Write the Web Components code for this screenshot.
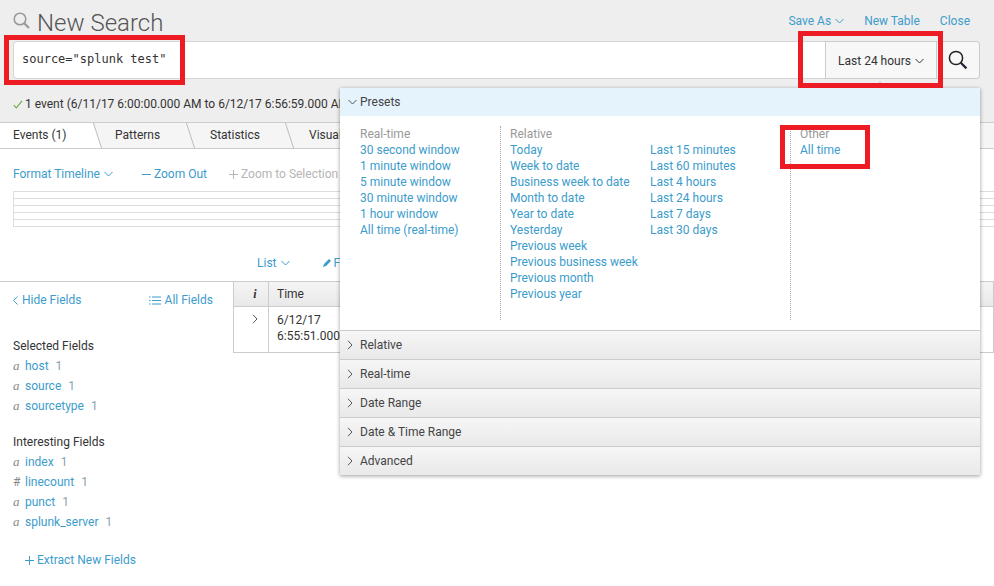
<!DOCTYPE html>
<html>
<head>
<meta charset="utf-8">
<title>New Search</title>
<style>
  html, body { margin: 0; padding: 0; background: #fff; }
  body { font: 12px/16px Roboto, "Liberation Sans", sans-serif; color: #333; width: 994px; height: 586px; overflow: hidden; position: relative; }
</style>
</head>
<body>
<search-head></search-head>
<result-tabs></result-tabs>
<time-line></time-line>
<div style="display:flex;">
  <field-list></field-list>
  <event-table></event-table>
</div>
<time-menu></time-menu>
<red-mark style="left:4px;top:35px;width:181px;height:50px"></red-mark>
<red-mark style="left:798px;top:31px;width:145px;height:57px"></red-mark>
<red-mark style="left:780px;top:125px;width:90px;height:44px"></red-mark>
<script>
const chevDown = `<svg width="9" height="6" viewBox="0 0 9 6" style="margin-left:4px;vertical-align:1px"><path d="M.5 1l4 4 4-4" fill="none" stroke="currentColor"/></svg>`;
const chevRight = `<svg width="6" height="10" viewBox="0 0 6 10"><path d="M1 .8l4 4.2-4 4.2" fill="none" stroke="#555"/></svg>`;
const plusIcon = c => `<svg width="9" height="9" viewBox="0 0 9 9" style="margin-right:3px;vertical-align:-1px"><path d="M0 4.500h9M4.500 0v9" stroke="${c}"/></svg>`;
const minusIcon = c => `<svg width="9" height="9" viewBox="0 0 9 9" style="margin-right:3px;vertical-align:-1px"><path d="M0 4.500h9" stroke="${c}"/></svg>`;

class SearchHead extends HTMLElement {
  connectedCallback() {
    this.attachShadow({ mode: 'open' }).innerHTML = `
      <style>
        :host { display: block; height: 122px; background: #eee; border-bottom: 1px solid #ccc; }
        a { color: #3c9ccb; text-decoration: none; }
        .top { display: flex; align-items: center; height: 41px; padding: 0 24px 0 13px; box-sizing: border-box; }
        h1 { margin: 0 0 0 7px; font: 300 24px/28px Roboto, sans-serif; color: #555; flex: 1; padding-top: 4px; }
        .top a { margin-left: 20px; }
        .bar { display: flex; height: 38px; margin-left: 13px; width: 967px; }
        .input { width: 812px; box-sizing: border-box; background: #fff; border: 1px solid #d5d5d5; border-right: 0; border-radius: 4px 0 0 4px; padding: 9px 8px; font: 12px/16px "DejaVu Sans Mono", monospace; color: #333; }
        .range { width: 112px; box-sizing: border-box; background: #f7f7f7; border: 1px solid #ccc; display: flex; align-items: center; justify-content: center; color: #333; padding-top: 2px; }
        .go { width: 43px; box-sizing: border-box; background: #f7f7f7; border: 1px solid #ccc; border-left: 0; border-radius: 0 4px 4px 0; display: flex; align-items: center; justify-content: center; }
        .status { padding: 17px 0 0 13px; line-height: 16px; color: #333; white-space: nowrap; }
        .status svg { margin-right: 2px; vertical-align: -1px; }
      </style>
      <div class="top">
        <svg width="17" height="17" viewBox="0 0 17 17"><circle cx="7" cy="7" r="5.8" fill="none" stroke="#999" stroke-width="1.6"/><path d="M11 11l5 5" stroke="#999" stroke-width="2.2"/></svg>
        <h1>New Search</h1>
        <a>Save As${chevDown}</a><a>New Table</a><a>Close</a>
      </div>
      <div class="bar">
        <div class="input">source="splunk test"</div>
        <div class="range">Last 24 hours${chevDown}</div>
        <div class="go"><svg width="20" height="20" viewBox="0 0 20 20"><circle cx="8" cy="8" r="6.6" fill="none" stroke="#222" stroke-width="1.5"/><path d="M12.8 12.8l5.6 5.6" stroke="#223" stroke-width="2.2"/></svg></div>
      </div>
      <div class="status"><svg width="10" height="9" viewBox="0 0 10 9"><path d="M.7 5l2.6 3L9 .8" fill="none" stroke="#65a637" stroke-width="1.1"/></svg>1 event (6/11/17 6:00:00.000 AM to 6/12/17 6:56:59.000 AM)</div>
    `;
  }
}

class ResultTabs extends HTMLElement {
  connectedCallback() {
    const tabs = [['Events (1)', 93, 13], ['Patterns', 93, 22], ['Statistics', 99, 24], ['Visualization', 120, 24]];
    this.attachShadow({ mode: 'open' }).innerHTML = `
      <style>
        :host { display: block; height: 25px; background: #fff; border-bottom: 1px solid #ccc; }
        .row { display: flex; height: 25px; overflow: hidden; }
        .tab { position: relative; height: 25px; box-sizing: border-box; line-height: 25px; white-space: nowrap; color: #333; background: #f5f5f5; flex: none; }
        .tab.on { background: #fff; }
        .tab::after { content: ""; position: absolute; top: -1px; bottom: -1px; right: -5px; width: 9px; background: inherit; border-right: 1px solid #bbb; transform: skewX(18deg); }
        .fill { flex: 1; background: #f5f5f5; }
      </style>
      <div class="row">${tabs.map((t, i) => `<div class="tab${i ? '' : ' on'}" style="width:${t[1]}px;padding-left:${t[2]}px;z-index:${9 - i}">${t[0]}</div>`).join('')}<div class="fill"></div></div>
    `;
  }
}

class TimeLine extends HTMLElement {
  connectedCallback() {
    this.attachShadow({ mode: 'open' }).innerHTML = `
      <style>
        :host { display: block; height: 133px; box-sizing: border-box; padding: 17px 0 0 13px; border-bottom: 1px solid #ccc; }
        a { color: #3c9ccb; }
        .ctl { display: flex; height: 16px; white-space: nowrap; }
        .ctl a:nth-child(2) { margin-left: 29px; }
        .ctl a:nth-child(3) { margin-left: 22px; color: #b5b5b5; }
        .grid { margin-top: 9px; height: 36px; border-left: 1px solid #ddd; box-sizing: border-box;
          background: repeating-linear-gradient(to bottom, #ddd 0, #ddd 1px, transparent 1px, transparent 7px); }
        .views { display: flex; padding-left: 244px; margin-top: 28px; white-space: nowrap; }
        .views a:nth-child(2) { margin-left: 33px; }
      </style>
      <div class="ctl"><a>Format Timeline${chevDown}</a><a>${minusIcon('#3c9ccb')}Zoom Out</a><a>${plusIcon('#b5b5b5')}Zoom to Selection</a></div>
      <div class="grid"></div>
      <div class="views"><a>List${chevDown}</a><a><svg width="9" height="9" viewBox="0 0 9 9" style="margin-right:2px"><path d="M0 9l1-3 5-5 2 2-5 5z" fill="#3c9ccb"/></svg>Format</a></div>
    `;
  }
}

class FieldList extends HTMLElement {
  connectedCallback() {
    const row = ([t, n, c]) => `<div class="f"><i class="${c === '#' ? 'n' : ''}">${c}</i><a>${n}</a><span>1</span></div>`;
    const sel = [['a', 'host', 'a'], ['a', 'source', 'a'], ['a', 'sourcetype', 'a']];
    const int = [['a', 'index', 'a'], ['n', 'linecount', '#'], ['a', 'punct', 'a'], ['a', 'splunk_server', 'a']];
    this.attachShadow({ mode: 'open' }).innerHTML = `
      <style>
        :host { display: block; width: 233px; flex: none; box-sizing: border-box; padding: 10px 20px 0 13px; }
        a { color: #3c9ccb; }
        .top { display: flex; justify-content: space-between; }
        .top svg { vertical-align: -1px; margin-right: 4px; }
        .top a:last-child svg { margin-right: 4px; margin-left: -1px; }
        h3 { font: inherit; color: #333; margin: 0; height: 16px; }
        .f { height: 20px; line-height: 20px; display: flex; }
        .f i { width: 12px; color: #888; font: italic 13px/20px "Liberation Serif", serif; }
        .f i.n { font: 12px/20px Roboto, sans-serif; }
        .f span { margin-left: 7px; color: #8aa0ad; }
        .sel { margin-top: 30px; }
        .int { margin-top: 18px; }
        .ex { margin: 20px 0 0 12px; }
      </style>
      <div class="top"><a><svg width="5" height="9" viewBox="0 0 5 9"><path d="M4.500.5l-4 4 4 4" fill="none" stroke="#3c9ccb"/></svg>Hide Fields</a><a><svg width="12" height="9" viewBox="0 0 12 9"><path d="M3 1h9M3 4.500h9M3 8h9M0 1h1.500M0 4.500h1.500M0 8h1.500" stroke="#3c9ccb"/></svg>All Fields</a></div>
      <div class="sel"><h3>Selected Fields</h3><div style="margin-top:2px">${sel.map(row).join('')}</div></div>
      <div class="int"><h3>Interesting Fields</h3><div style="margin-top:2px">${int.map(row).join('')}</div></div>
      <div class="ex"><a>${plusIcon('#3c9ccb')}Extract New Fields</a></div>
    `;
  }
}

class EventTable extends HTMLElement {
  connectedCallback() {
    this.attachShadow({ mode: 'open' }).innerHTML = `
      <style>
        :host { display: block; flex: 1; }
        .t { display: grid; grid-template-columns: 36px 1fr; }
        .t > div { box-sizing: border-box; border-right: 1px solid #ccc; border-bottom: 1px solid #ccc; }
        .h { height: 25px; line-height: 24px; background: linear-gradient(#f5f5f5, #e9e9e9); }
        .i { border-left: 1px solid #ccc; text-align: center; padding-left: 8px; }
        .i i { font: italic bold 12px/24px "Liberation Serif", serif; }
        .tm { padding-left: 8px; }
        .r { height: 46px; }
        .c { display: flex; justify-content: center; padding-top: 7px; }
        .c svg { height: 10px; }
        .d { padding: 5px 0 0 8px; white-space: nowrap; overflow: hidden; }
      </style>
      <div class="t">
        <div class="h i"><i>i</i></div><div class="h tm">Time</div>
        <div class="r i c">${chevRight}</div><div class="r d">6/12/17<br>6:55:51.000 AM</div>
      </div>
    `;
  }
}

class TimeMenu extends HTMLElement {
  connectedCallback() {
    const links = a => a.map(x => `<a>${x}</a>`).join('');
    this.attachShadow({ mode: 'open' }).innerHTML = `
      <style>
        :host { position: absolute; left: 340px; top: 88px; width: 640px; background: #fff; box-shadow: 0 1px 4px rgba(0,0,0,.4); z-index: 20; }
        .notch { position: absolute; left: 536px; top: -5px; width: 8px; height: 8px; background: #fff; transform: rotate(45deg); border: 1px solid #ccc; border-right: 0; border-bottom: 0; box-sizing: border-box; }
        .p { position: relative; height: 28px; background: #e5f3fd; display: flex; align-items: center; padding-left: 8px; color: #444; }
        .p svg { margin-right: 3px; flex: none; }
        .body { display: flex; height: 215px; padding-top: 10px; box-sizing: border-box; border-bottom: 1px solid #ccc; }
        .col { display: flex; flex-direction: column; height: 194px; box-sizing: border-box; }
        .col b { font-weight: 400; color: #999; }
        .col a { color: #3c9ccb; white-space: nowrap; }
        .c1 { width: 161px; padding-left: 20px; border-right: 1px dotted #aaa; }
        .c2 { width: 149px; padding-left: 9px; }
        .c3 { width: 140px; padding-top: 16px; }
        .c4 { padding-left: 9px; border-left: 1px dotted #aaa; }
        .row { height: 29px; box-sizing: border-box; border-bottom: 1px solid #ccc; background: linear-gradient(#f6f6f6, #e9e9e9); display: flex; align-items: center; padding-left: 7px; color: #444; }
        .row svg { margin-right: 7px; flex: none; }
        .row:last-child { border-bottom: 0; height: 28px; }
      </style>
      <div class="notch"></div>
      <div class="p"><svg width="9" height="6" viewBox="0 0 9 6"><path d="M.5 1l4 4 4-4" fill="none" stroke="#555"/></svg>Presets</div>
      <div class="body">
        <div class="col c1"><b>Real-time</b>${links(['30 second window', '1 minute window', '5 minute window', '30 minute window', '1 hour window', 'All time (real-time)'])}</div>
        <div class="col c2"><b>Relative</b>${links(['Today', 'Week to date', 'Business week to date', 'Month to date', 'Year to date', 'Yesterday', 'Previous week', 'Previous business week', 'Previous month', 'Previous year'])}</div>
        <div class="col c3">${links(['Last 15 minutes', 'Last 60 minutes', 'Last 4 hours', 'Last 24 hours', 'Last 7 days', 'Last 30 days'])}</div>
        <div class="col c4"><b>Other</b><a>All time</a></div>
      </div>
      ${['Relative', 'Real-time', 'Date Range', 'Date &amp; Time Range', 'Advanced'].map(t => `<div class="row">${chevRight}${t}</div>`).join('')}
    `;
  }
}

class RedMark extends HTMLElement {
  connectedCallback() {
    this.attachShadow({ mode: 'open' }).innerHTML = `
      <style>:host { position: absolute; box-sizing: border-box; border: 5px solid #ed1c24; z-index: 30; pointer-events: none; }</style>
    `;
  }
}

customElements.define('search-head', SearchHead);
customElements.define('result-tabs', ResultTabs);
customElements.define('time-line', TimeLine);
customElements.define('field-list', FieldList);
customElements.define('event-table', EventTable);
customElements.define('time-menu', TimeMenu);
customElements.define('red-mark', RedMark);
</script>
</body>
</html>
